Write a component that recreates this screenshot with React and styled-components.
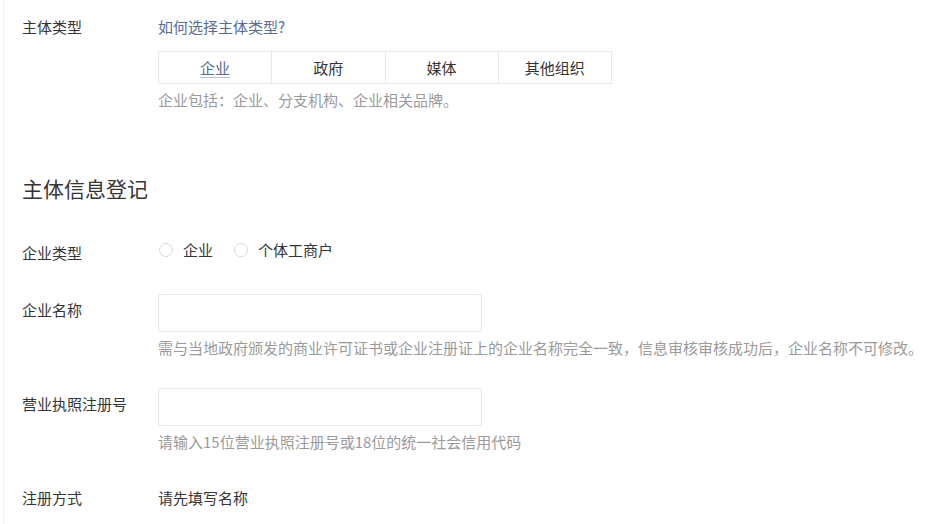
import React, { useState } from "react";
import styled, { createGlobalStyle } from "styled-components";

const GlobalStyle = createGlobalStyle`
  html, body {
    margin: 0;
    padding: 0;
    background: #fff;
  }
  body {
    font-family: "Noto Sans CJK SC", "Liberation Sans", sans-serif;
    font-size: 15px;
    color: #353535;
  }
`;

const Page = styled.div`
  width: 932px;
  height: 524px;
  box-sizing: border-box;
  margin-left: 3px;
  border-left: 1px solid #f1f1f1;
  padding-left: 18px;
  overflow: hidden;
`;

const Row = styled.div`
  display: flex;
  align-items: flex-start;
  margin-top: ${(p) => p.$top || 0}px;
`;

const Label = styled.div`
  width: 136px;
  flex-shrink: 0;
  line-height: ${(p) => p.$lh || 22}px;
  color: #353535;
`;

const Field = styled.div`
  display: flex;
  flex-direction: column;
  line-height: 22px;
`;

const Link = styled.a`
  color: #576b95;
  text-decoration: none;
  cursor: pointer;
`;

const Tabs = styled.div`
  display: flex;
  width: 454px;
  height: 33px;
  margin-top: 13px;
  border: 1px solid #e7e7eb;
  box-sizing: border-box;
`;

const Tab = styled.div`
  flex: 1;
  display: flex;
  align-items: center;
  justify-content: center;
  border-left: ${(p) => (p.$first ? "none" : "1px solid #e7e7eb")};
  color: ${(p) => (p.$active ? "#576b95" : "#353535")};
  text-decoration: ${(p) => (p.$active ? "underline" : "none")};
  text-underline-offset: 3px;
  text-decoration-color: #b9c0d4;
  cursor: pointer;
`;

const Hint = styled.div`
  color: #9a9a9a;
  margin-top: ${(p) => p.$top || 5}px;
  white-space: nowrap;
`;

const Heading = styled.h2`
  margin: 0;
  margin-top: 62px;
  font-size: 21px;
  font-weight: 400;
  line-height: 30px;
  color: #353535;
`;

const Radios = styled.div`
  display: flex;
  align-items: center;
  gap: 20px;
`;

const RadioItem = styled.label`
  display: flex;
  align-items: center;
  gap: 10px;
  cursor: pointer;
`;

const Circle = styled.span`
  width: 14px;
  height: 14px;
  border-radius: 50%;
  border: 1px solid #d9d9d9;
  box-sizing: border-box;
  margin-left: 1px;
  background: ${(p) => (p.$on ? "#576b95" : "#fff")};
`;

const Input = styled.input`
  width: 324px;
  height: 38px;
  box-sizing: border-box;
  border: 1px solid #e7e7eb;
  border-radius: 3px;
  padding: 0 10px;
  font: inherit;
  outline: none;
`;

const types = ["企业", "政府", "媒体", "其他组织"];

export default function App() {
  const [tab, setTab] = useState(0);
  const [kind, setKind] = useState(null);

  return (
    <>
      <GlobalStyle />
      <Page>
        <Row $top={16}>
          <Label>主体类型</Label>
          <Field>
            <Link>如何选择主体类型?</Link>
            <Tabs>
              {types.map((t, i) => (
                <Tab key={t} $first={i === 0} $active={tab === i} onClick={() => setTab(i)}>
                  {t}
                </Tab>
              ))}
            </Tabs>
            <Hint $top={5}>企业包括：企业、分支机构、企业相关品牌。</Hint>
          </Field>
        </Row>

        <Heading>主体信息登记</Heading>

        <Row $top={36}>
          <Label $lh={28}>企业类型</Label>
          <Radios>
            <RadioItem onClick={() => setKind(0)}>
              <Circle $on={kind === 0} />
              企业
            </RadioItem>
            <RadioItem onClick={() => setKind(1)}>
              <Circle $on={kind === 1} />
              个体工商户
            </RadioItem>
          </Radios>
        </Row>

        <Row $top={27}>
          <Label $lh={32}>企业名称</Label>
          <Field>
            <Input />
            <Hint>
              需与当地政府颁发的商业许可证书或企业注册证上的企业名称完全一致，信息审核审核成功后，企业名称不可修改。
            </Hint>
          </Field>
        </Row>

        <Row $top={29}>
          <Label $lh={32}>营业执照注册号</Label>
          <Field>
            <Input />
            <Hint>请输入15位营业执照注册号或18位的统一社会信用代码</Hint>
          </Field>
        </Row>

        <Row $top={34}>
          <Label>注册方式</Label>
          <Field>请先填写名称</Field>
        </Row>
      </Page>
    </>
  );
}
